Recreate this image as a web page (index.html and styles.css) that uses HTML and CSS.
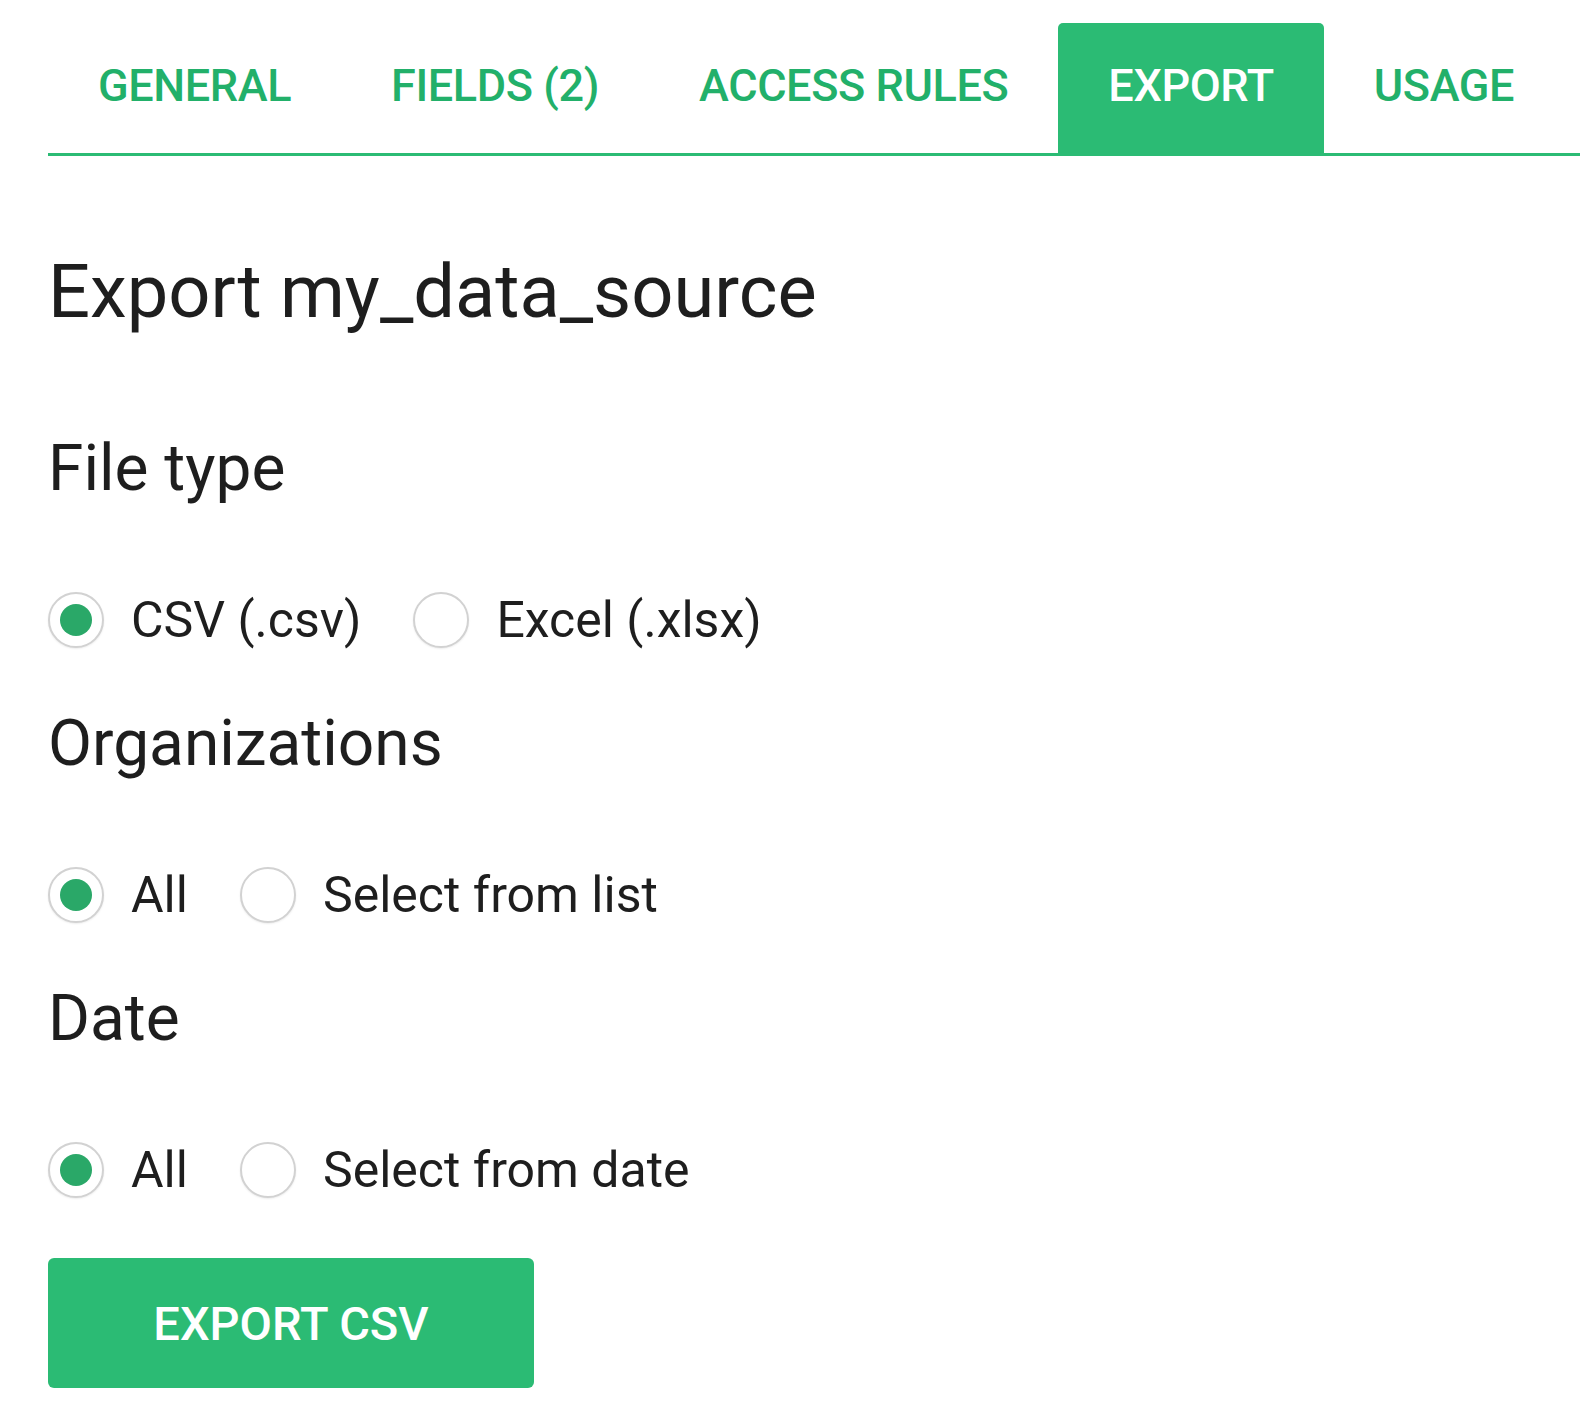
FILE: index.html
```html
<!DOCTYPE html>
<html lang="en">
<head>
    <meta charset="UTF-8">
    <title>Export my_data_source</title>
    <link rel="stylesheet" href="styles.css">
</head>
<body>
    <div class="page">
        <nav class="tabs">
            <a class="tab">General</a>
            <a class="tab">Fields (2)</a>
            <a class="tab">Access rules</a>
            <a class="tab active">Export</a>
            <a class="tab">Usage</a>
        </nav>

        <h1 class="title">Export my_data_source</h1>

        <h2 class="section">File type</h2>
        <div class="radio-row">
            <label class="radio"><span class="dot checked"></span>CSV (.csv)</label>
            <label class="radio"><span class="dot"></span>Excel (.xlsx)</label>
        </div>

        <h2 class="section">Organizations</h2>
        <div class="radio-row">
            <label class="radio"><span class="dot checked"></span>All</label>
            <label class="radio"><span class="dot"></span>Select from list</label>
        </div>

        <h2 class="section">Date</h2>
        <div class="radio-row">
            <label class="radio"><span class="dot checked"></span>All</label>
            <label class="radio"><span class="dot"></span>Select from date</label>
        </div>

        <button type="button" class="export-btn">Export CSV</button>
    </div>
</body>
</html>
```

FILE: styles.css
```css
body {
    margin: 0;
    padding: 0;
    font-family: Roboto, "Liberation Sans", sans-serif;
    color: #1e1e1e;
    background: #fff;
}

.page {
    padding-left: 48px;
}

.tabs {
    display: flex;
    margin-top: 23px;
    border-bottom: 3px solid #2bbb74;
}

.tab {
    display: flex;
    align-items: center;
    flex-shrink: 0;
    box-sizing: border-box;
    height: 130px;
    padding: 0 50px 6px;
    white-space: nowrap;
    font-size: 45px;
    font-weight: 500;
    letter-spacing: -0.4px;
    text-transform: uppercase;
    color: #22b06a;
    border-radius: 5px 5px 0 0;
}

.tab.active {
    background-color: #2bbb74;
    color: #fff;
}

.title {
    margin: 99px 0 0;
    font-size: 74px;
    font-weight: 400;
    line-height: 1;
}

.section {
    margin: 108px 0 0;
    font-size: 64px;
    font-weight: 400;
    line-height: 1;
}

.radio-row + .section {
    margin-top: 64px;
}

.radio-row {
    display: flex;
    align-items: center;
    gap: 52px;
    margin-top: 91px;
    height: 56px;
}

.radio {
    display: flex;
    align-items: center;
    gap: 27px;
    font-size: 50px;
    line-height: 1;
}

.dot {
    box-sizing: border-box;
    width: 56px;
    height: 56px;
    border: 2px solid #d2d2d2;
    border-radius: 50%;
    background: #fff;
    box-shadow: 0 1px 2px rgba(0, 0, 0, 0.08);
    display: flex;
    align-items: center;
    justify-content: center;
}

.dot.checked::after {
    content: "";
    width: 32px;
    height: 32px;
    border-radius: 50%;
    background-color: #2aa868;
}

.export-btn {
    display: block;
    margin-top: 60px;
    width: 486px;
    height: 130px;
    border: none;
    border-radius: 6px;
    background-color: #2bbb74;
    color: #fff;
    font-family: inherit;
    font-size: 47px;
    font-weight: 500;
    text-transform: uppercase;
}
```
